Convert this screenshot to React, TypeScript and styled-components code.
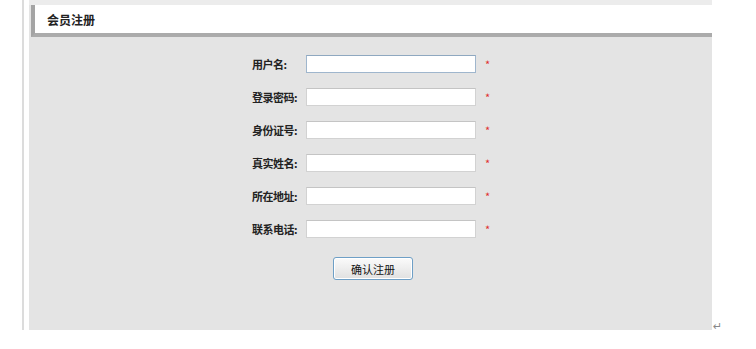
import React from 'react';
import styled, {createGlobalStyle} from 'styled-components';

const GlobalStyle = createGlobalStyle`
    body {
        margin: 0;
        background: #fff;
        font-family: "Noto Sans CJK SC", "Liberation Sans", sans-serif;
    }
`;

const Page = styled.div`
    display: flex;
    padding-left: 22px;
`;

const Frame = styled.div`
    display: flex;
    height: 330px;
    padding-left: 5px;
    border-left: 2px solid #dcdcdc;
`;

const Panel = styled.div`
    display: flex;
    flex-direction: column;
    width: 683px;
    background: #e4e4e4;
    border-top: 5px solid #ececec;
`;

const Header = styled.div`
    display: flex;
    align-items: center;
    height: 28px;
    margin-left: 2px;
    padding-left: 12px;
    background: #fff;
    border-left: 4px solid #a4a4a4;
    border-bottom: 4px solid #ababab;
    font-size: 12px;
    font-weight: 700;
    color: #222;
`;

const Body = styled.div`
    display: flex;
    flex-direction: column;
    padding-top: 10px;
`;

const Row = styled.div`
    display: grid;
    grid-template-columns: 54px 170px auto;
    align-items: center;
    height: 33px;
    padding-left: 223px;
`;

const Label = styled.label`
    font-size: 11px;
    font-weight: 700;
    letter-spacing: -0.5px;
    color: #222;
`;

const Input = styled.input<{$focused?: boolean}>`
    box-sizing: border-box;
    width: 170px;
    height: 18px;
    margin: 0;
    padding: 0 3px;
    background: #fff;
    border: 1px solid ${(p) => (p.$focused ? '#9fb6cd' : '#d2d2d2')};
    border-top-color: ${(p) => (p.$focused ? '#8fa8c0' : '#c4c4c4')};
    outline: none;
`;

const Required = styled.span`
    margin-left: 9px;
    font-size: 11px;
    color: #e03030;
`;

const Submit = styled.button`
    box-sizing: border-box;
    width: 80px;
    height: 23px;
    margin: 12px 0 0 304px;
    padding: 0;
    border: 1px solid #6e9fc6;
    border-radius: 3px;
    background: linear-gradient(#fbfbfb, #e0e0e0);
    box-shadow: inset 0 0 0 1px #ffffff;
    font-family: "Noto Sans CJK SC", sans-serif;
    font-size: 11px;
    color: #111;
`;

const Mark = styled.span`
    align-self: flex-end;
    margin-bottom: -3px;
    padding-left: 1px;
    font-family: "DejaVu Sans", sans-serif;
    font-size: 11px;
    color: #888;
`;

const fields = ['用户名:', '登录密码:', '身份证号:', '真实姓名:', '所在地址:', '联系电话:'];

const App = () => (
    <>
        <GlobalStyle/>
        <Page>
            <Frame>
                <Panel>
                    <Header>{'会员注册'}</Header>
                    <Body>
                        {fields.map((label, i) => (
                            <Row key={label}>
                                <Label>{label}</Label>
                                <Input
                                    type={i === 1 ? 'password' : 'text'}
                                    $focused={i === 0}
                                />
                                <Required>{'*'}</Required>
                            </Row>
                        ))}
                        <Submit type='button'>{'确认注册'}</Submit>
                    </Body>
                </Panel>
                <Mark>{'↵'}</Mark>
            </Frame>
        </Page>
    </>
);

export default App;
